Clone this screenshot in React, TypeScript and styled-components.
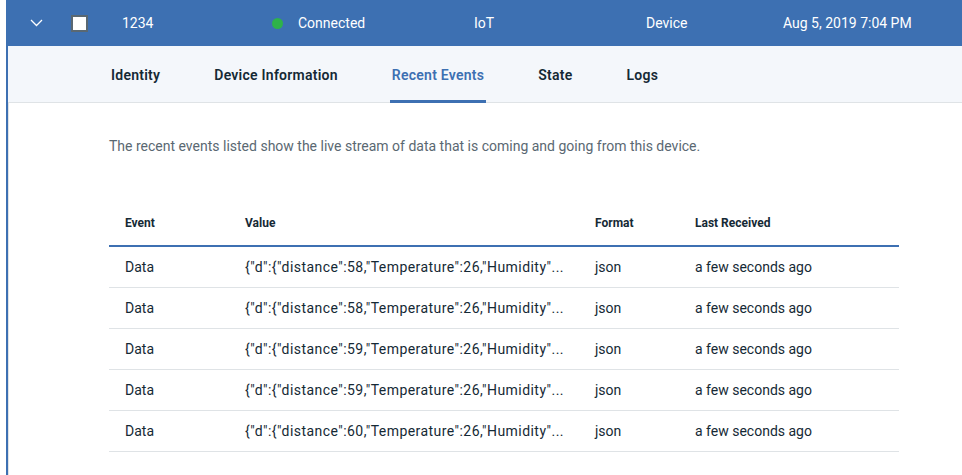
import React from "react";
import styled, { createGlobalStyle } from "styled-components";

const Global = createGlobalStyle`
  html, body { margin: 0; padding: 0; background: #ffffff; }
  body { font-family: Roboto, "Noto Sans", Arial, sans-serif; color: #152935; }
  * { box-sizing: border-box; }
`;

const Page = styled.div`
  padding-left: 6px;
  width: 962px;
`;

const HeaderRow = styled.div`
  height: 46px;
  background: #3d70b2;
  color: #ffffff;
  display: flex;
  align-items: center;
  font-size: 14px;
`;

const Cell = styled.div<{ $w: number; $pl?: number }>`
  width: ${(p) => p.$w}px;
  padding-left: ${(p) => p.$pl ?? 0}px;
  flex: none;
  display: flex;
  align-items: center;
  white-space: nowrap;
`;

const Checkbox = styled.span`
  width: 17px;
  height: 17px;
  background: #ffffff;
  border: 2px solid #5a6872;
  display: inline-block;
`;

const Dot = styled.span`
  width: 11px;
  height: 11px;
  border-radius: 50%;
  background: #2eb24a;
  display: inline-block;
  margin-right: 15px;
`;

const Panel = styled.div`
  border-left: 2px solid #3d70b2;
  box-shadow: inset 1px 0 0 #dfe3e6;
  padding-bottom: 24px;
`;

const TabBar = styled.div`
  height: 57px;
  background: #f4f7fb;
  border-bottom: 1px solid #dfe3e6;
  display: flex;
  align-items: stretch;
  padding-left: 101px;
  gap: 50px;
`;

const Tab = styled.div<{ $active?: boolean }>`
  display: flex;
  align-items: center;
  padding: 3px 2px 0;
  font-size: 14px;
  font-weight: 600;
  letter-spacing: 0.25px;
  color: ${(p) => (p.$active ? "#3d70b2" : "#152935")};
  border-bottom: 3px solid ${(p) => (p.$active ? "#3d70b2" : "transparent")};
  margin-bottom: -1px;
`;

const Content = styled.div`
  padding-left: 101px;
  padding-right: 61px;
`;

const Description = styled.p`
  margin: 34px 0 0;
  font-size: 14px;
  line-height: 18px;
  color: #5a6872;
`;

const Table = styled.div`
  margin-top: 47px;
  width: 790px;
`;

const THead = styled.div`
  display: grid;
  grid-template-columns: 120px 350px 100px 1fr;
  height: 45px;
  padding-bottom: 2px;
  align-items: center;
  border-bottom: 2px solid #3d70b2;
  padding-left: 16px;
  font-size: 12px;
  font-weight: 700;
  color: #152935;
`;

const TRow = styled.div`
  display: grid;
  grid-template-columns: 120px 350px 100px 1fr;
  height: 41px;
  align-items: center;
  border-bottom: 1px solid #dfe3e6;
  padding-left: 16px;
  font-size: 14px;
  color: #152935;
`;

const ValueText = styled.span`
  letter-spacing: 0.45px;
  white-space: nowrap;
`;

const Chevron = () => (
  <svg width="13" height="8" viewBox="0 0 13 8" fill="none">
    <path d="M1 1l5.5 5.5L12 1" stroke="#ffffff" strokeWidth="1.3" />
  </svg>
);

const rows = [58, 58, 59, 59, 60];

export default function App() {
  return (
    <Page>
      <Global />
      <HeaderRow>
        <Cell $w={65} $pl={24}>
          <Chevron />
        </Cell>
        <Cell $w={51}>
          <Checkbox />
        </Cell>
        <Cell $w={150}>1234</Cell>
        <Cell $w={202}>
          <Dot />
          Connected
        </Cell>
        <Cell $w={172}>IoT</Cell>
        <Cell $w={137}>Device</Cell>
        <Cell $w={180}>Aug 5, 2019 7:04 PM</Cell>
      </HeaderRow>
      <Panel>
        <TabBar>
          <Tab>Identity</Tab>
          <Tab>Device Information</Tab>
          <Tab $active>Recent Events</Tab>
          <Tab>State</Tab>
          <Tab>Logs</Tab>
        </TabBar>
        <Content>
          <Description>
            The recent events listed show the live stream of data that is coming and going from this device.
          </Description>
          <Table>
            <THead>
              <span>Event</span>
              <span>Value</span>
              <span>Format</span>
              <span>Last Received</span>
            </THead>
            {rows.map((d, i) => (
              <TRow key={i}>
                <span>Data</span>
                <ValueText>{`{"d":{"distance":${d},"Temperature":26,"Humidity"...`}</ValueText>
                <span>json</span>
                <span>a few seconds ago</span>
              </TRow>
            ))}
          </Table>
        </Content>
      </Panel>
    </Page>
  );
}
